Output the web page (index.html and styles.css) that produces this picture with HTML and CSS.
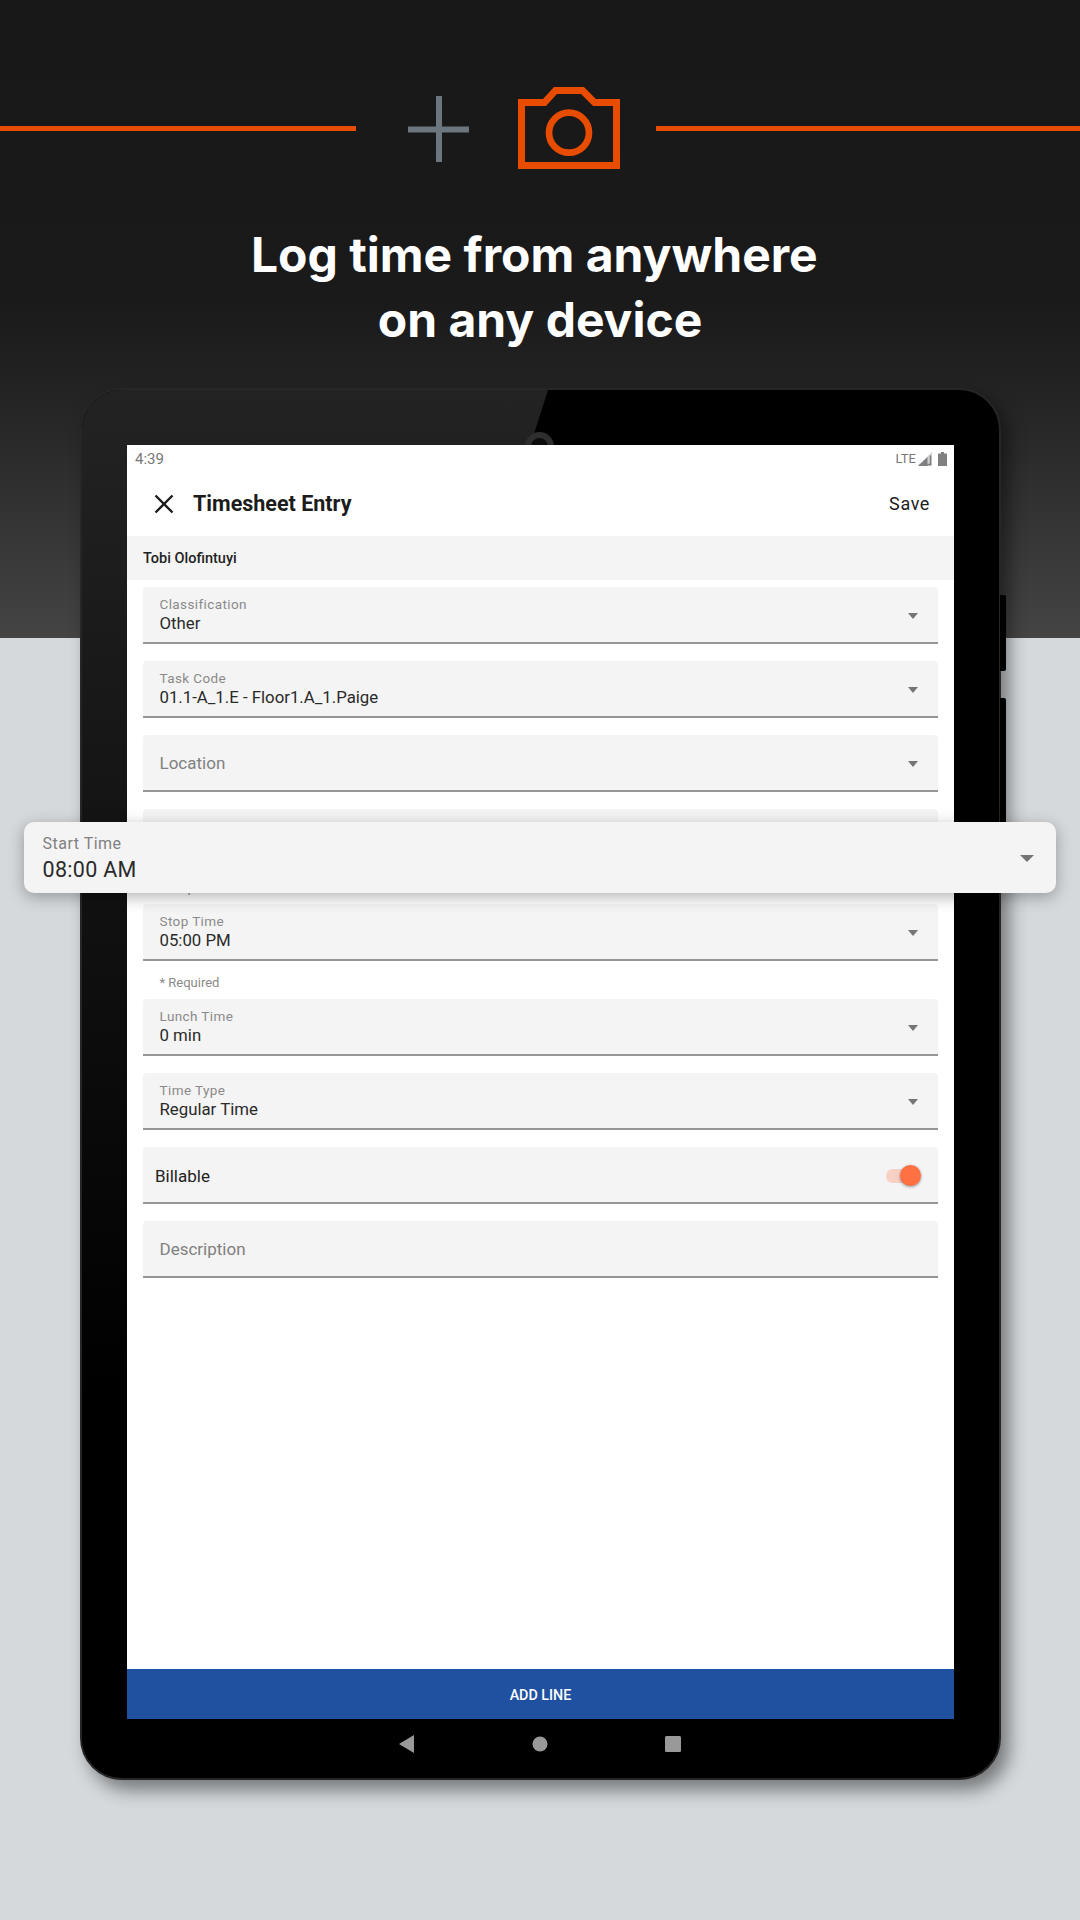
FILE: index.html
```html
<!DOCTYPE html>
<html lang="en">
<head>
    <meta charset="UTF-8">
    <meta name="viewport" content="width=device-width, initial-scale=1.0">
    <title>Log time from anywhere</title>
    <link rel="stylesheet" href="styles.css">
</head>
<body>

<div class="page">

    <!-- Top banner -->
    <div class="icon-row">
        <div class="rule rule-left"></div>
        <svg class="plus" width="61" height="66" viewBox="0 0 61 66">
            <path d="M0 33.500H61M31 0V66" fill="none" stroke="#6b767e" stroke-width="6"/>
        </svg>
        <svg class="camera" width="102" height="82" viewBox="0 0 102 82">
            <path d="M3.500 15.500H26.500L37.500 3.500H64.500L76.500 15.500H98.500V78.500H3.500Z" fill="none" stroke="#e84c00" stroke-width="7"/>
            <circle cx="51" cy="45.700" r="20" fill="none" stroke="#e84c00" stroke-width="6.700"/>
        </svg>
        <div class="rule"></div>
    </div>
    <h1 class="headline">Log time from anywhere 
on any device</h1>

    <!-- Tablet -->
    <div class="tablet">
        <div class="glare"></div>
        <div class="lens"></div>
        <div class="side-btn side-btn-top"></div>
        <div class="side-btn side-btn-low"></div>

        <div class="screen">
            <div class="status-bar">
                <span>4:39</span>
                <div class="status-icons">
                    <span class="lte">LTE</span>
                    <svg width="14" height="14" viewBox="0 0 14 14">
                        <path d="M14 0V14H0Z" fill="#d0d0d0"/>
                        <path d="M9.5 5V14H0L9.5 5Z" fill="#808080"/>
                        <path d="M12.5 3.5V12.500H1.500" fill="none" stroke="#808080" stroke-width="1.500"/>
                    </svg>
                    <svg width="9" height="14" viewBox="0 0 9 14">
                        <path d="M3 0H6V1.500H9V14H0V1.500H3Z" fill="#808080"/>
                    </svg>
                </div>
            </div>

            <div class="app-bar">
                <svg class="close-icon" width="20" height="20" viewBox="0 0 20 20">
                    <path d="M1.500 1.500L18.500 18.500M18.500 1.500L1.500 18.500" fill="none" stroke="#1c1c1c" stroke-width="2.400"/>
                </svg>
                <div class="app-title">Timesheet Entry</div>
                <div class="save">Save</div>
            </div>

            <div class="name-strip">Tobi Olofintuyi</div>

            <div class="form">
                <div class="field">
                    <div class="field-text">
                        <div class="field-label">Classification</div>
                        <div class="field-value">Other</div>
                    </div>
                    <div class="caret"></div>
                </div>
                <div class="field">
                    <div class="field-text">
                        <div class="field-label">Task Code</div>
                        <div class="field-value">01.1-A_1.E - Floor1.A_1.Paige</div>
                    </div>
                    <div class="caret"></div>
                </div>
                <div class="field field-empty">
                    <div class="field-placeholder">Location</div>
                    <div class="caret"></div>
                </div>
                <div class="field-group">
                    <div class="field">
                        <div class="field-text">
                            <div class="field-label">Start Time</div>
                            <div class="field-value">08:00 AM</div>
                        </div>
                        <div class="caret"></div>
                    </div>
                    <div class="helper">* Required</div>
                </div>
                <div class="field-group">
                    <div class="field">
                        <div class="field-text">
                            <div class="field-label">Stop Time</div>
                            <div class="field-value">05:00 PM</div>
                        </div>
                        <div class="caret"></div>
                    </div>
                    <div class="helper">* Required</div>
                </div>
                <div class="field">
                    <div class="field-text">
                        <div class="field-label">Lunch Time</div>
                        <div class="field-value">0 min</div>
                    </div>
                    <div class="caret"></div>
                </div>
                <div class="field">
                    <div class="field-text">
                        <div class="field-label">Time Type</div>
                        <div class="field-value">Regular Time</div>
                    </div>
                    <div class="caret"></div>
                </div>
                <div class="field field-empty field-toggle">
                    <div class="toggle-label">Billable</div>
                    <div class="toggle">
                        <div class="toggle-thumb"></div>
                    </div>
                </div>
                <div class="field field-empty">
                    <div class="field-placeholder">Description</div>
                </div>
            </div>

            <div class="add-line">ADD LINE</div>
        </div>

        <div class="nav-bar">
            <svg width="16" height="18" viewBox="0 0 16 18"><path d="M15 0V18L0 9Z" fill="#999"/></svg>
            <svg width="16" height="16" viewBox="0 0 16 16"><circle cx="8" cy="8" r="7.500" fill="#999"/></svg>
            <svg width="16" height="16" viewBox="0 0 16 16"><rect width="16" height="16" rx="1.500" fill="#999"/></svg>
        </div>
    </div>

    <!-- Enlarged field lying over the tablet -->
    <div class="callout">
        <div class="field-text">
            <div class="callout-label">Start Time</div>
            <div class="callout-value">08:00 AM</div>
        </div>
        <div class="caret caret-big"></div>
    </div>

</div>

</body>
</html>
```

FILE: styles.css
```css
body {
    margin: 0;
    font-family: Roboto, "Liberation Sans", sans-serif;
}

.page {
    position: relative;
    width: 1080px;
    height: 1920px;
    overflow: hidden;
    background: linear-gradient(#181818 0, #1a1a1a 300px, #242424 400px, #444 638px, #d5d9dc 638px);
}

.icon-row {
    display: flex;
    align-items: center;
    padding-top: 87px;
}

.rule {
    flex: 1;
    height: 4.500px;
    margin-top: 1px;
    background-color: #e84c00;
}

.rule-left {
    flex: none;
    width: 356px;
}

.plus {
    margin: 2px 49px 0 52px;
}

.camera {
    margin-right: 36px;
}

.headline {
    margin: 53px 0 0;
    font-family: Inter, sans-serif;
    font-size: 48px;
    font-weight: 700;
    line-height: 65px;
    text-align: center;
    white-space: pre;
    color: #fff;
}

.tablet {
    position: relative;
    box-sizing: border-box;
    display: flex;
    flex-direction: column;
    width: 921px;
    height: 1392px;
    margin: 36px 0 0 80px;
    padding: 55px 45px 0;
    background-color: #000;
    border: 2px solid #262626;
    border-radius: 42px;
    box-shadow: 8px 10px 18px rgba(0, 0, 0, 0.45);
}

.glare {
    position: absolute;
    top: 0;
    left: 0;
    width: 100%;
    height: 100%;
    border-radius: 40px;
    background: linear-gradient(#232323, #000 72%);
    clip-path: polygon(0 0, 466px 0, 22px 100%, 0 100%);
}

.lens {
    position: absolute;
    top: 42px;
    left: 443px;
    width: 17px;
    height: 17px;
    background-color: #0c0c0c;
    border: 6.500px solid #2e2e2e;
    border-radius: 50%;
}

.side-btn {
    position: absolute;
    right: -7px;
    width: 6px;
    background-color: #000;
    border-radius: 0 2px 2px 0;
}

.side-btn-top {
    top: 205px;
    height: 76px;
}

.side-btn-low {
    top: 308px;
    height: 130px;
}

.screen {
    position: relative;
    flex: 1;
    display: flex;
    flex-direction: column;
    background-color: #fff;
}

.status-bar {
    box-sizing: border-box;
    display: flex;
    justify-content: space-between;
    align-items: center;
    height: 33px;
    padding: 0 7px 6px 8px;
    font-size: 15px;
    color: #777;
}

.status-icons {
    display: flex;
    align-items: center;
    gap: 6px;
}

.lte {
    margin-right: -4px;
    font-size: 13px;
}

.app-bar {
    box-sizing: border-box;
    display: flex;
    align-items: center;
    height: 58px;
    padding: 0 24px 7px 27px;
    color: #1c1c1c;
}

.close-icon {
    margin-right: 19px;
}

.app-title {
    flex: 1;
    font-size: 21.500px;
    font-weight: 700;
}

.save {
    font-size: 18px;
    font-weight: 400;
    letter-spacing: 0.6px;
}

.name-strip {
    display: flex;
    align-items: center;
    height: 44px;
    padding: 1px 0 0 16px;
    box-sizing: border-box;
    background-color: #f4f4f4;
    font-size: 14.500px;
    font-weight: 500;
    color: #222;
}

.form {
    flex: 1;
    display: flex;
    flex-direction: column;
    gap: 17px;
    padding: 7px 16px 0;
}

.field {
    box-sizing: border-box;
    display: flex;
    align-items: center;
    justify-content: space-between;
    height: 57px;
    padding: 0 20px 0 16.500px;
    background-color: #f4f4f4;
    border-bottom: 2px solid #969696;
    border-radius: 4px 4px 0 0;
}

.field-label {
    font-size: 13.500px;
    line-height: 18px;
    letter-spacing: 0.4px;
    color: #8a8a8a;
}

.field-value {
    font-size: 16.800px;
    line-height: 21px;
    color: #2a2a2a;
}

.field-placeholder {
    font-size: 17px;
    color: #808080;
}

.helper {
    box-sizing: border-box;
    height: 21px;
    padding: 14px 0 0 16.500px;
    font-size: 13px;
    line-height: 16px;
    color: #8a8a8a;
}

.caret {
    width: 0;
    height: 0;
    margin-top: 2px;
    border-left: 5.500px solid transparent;
    border-right: 5.500px solid transparent;
    border-top: 6px solid #757575;
}

.field-toggle {
    padding: 2px 24px 0 12px;
}

.toggle-label {
    font-size: 17px;
    color: #222;
}

.toggle {
    position: relative;
    width: 28px;
    height: 14px;
    background-color: #f8cfc3;
    border-radius: 7px;
}

.toggle-thumb {
    position: absolute;
    top: -4px;
    right: -7px;
    width: 21px;
    height: 21px;
    background-color: #ff7043;
    border-radius: 50%;
    box-shadow: 0 1px 3px rgba(0, 0, 0, 0.4);
}

.add-line {
    box-sizing: border-box;
    display: flex;
    align-items: center;
    justify-content: center;
    height: 50px;
    padding-top: 2px;
    background-color: #1f51a0;
    font-size: 14.300px;
    font-weight: 500;
    color: #fff;
}

.nav-bar {
    position: relative;
    display: flex;
    align-items: center;
    justify-content: center;
    gap: 117px;
    height: 59px;
    padding: 0 2px 10px 0;
    box-sizing: border-box;
}

.callout {
    position: absolute;
    top: 822px;
    left: 24px;
    box-sizing: border-box;
    display: flex;
    align-items: center;
    justify-content: space-between;
    width: 1032px;
    height: 71px;
    padding: 2px 22px 0 18.500px;
    background-color: #f4f4f4;
    border-radius: 10px;
    box-shadow: 0 4px 16px rgba(0, 0, 0, 0.3);
}

.callout-label {
    font-size: 16px;
    line-height: 22px;
    letter-spacing: 0.5px;
    color: #808080;
}

.callout-value {
    font-size: 21.500px;
    line-height: 29px;
    letter-spacing: 0.3px;
    color: #2a2a2a;
}

.caret-big {
    margin-top: 0;
    border-left-width: 7px;
    border-right-width: 7px;
    border-top-width: 7px;
}
```
